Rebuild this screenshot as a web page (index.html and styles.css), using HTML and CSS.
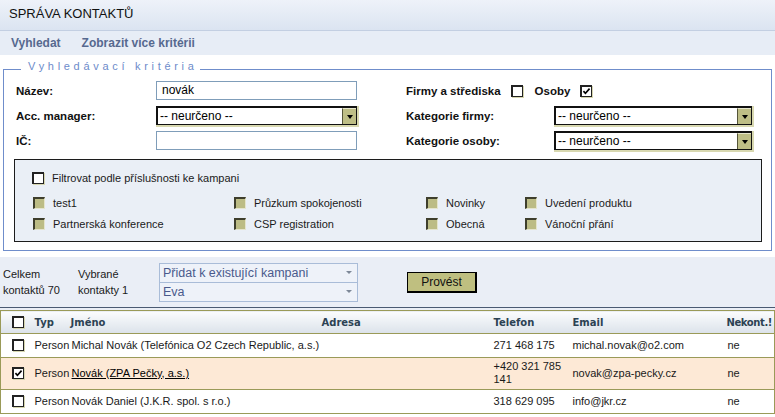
FILE: index.html
```html
<!DOCTYPE html>
<html lang="cs">
<head>
<meta charset="utf-8">
<title>Správa kontaktů</title>
<link rel="stylesheet" href="styles.css">
</head>
<body>
<header class="title">SPRÁVA KONTAKTŮ</header>
<nav class="tabs"><a>Vyhledat</a><a>Zobrazit více kritérii</a></nav>

<div class="search">
  <fieldset class="crit">
    <legend>Vyhledávací kritéria</legend>
    <div class="grid">
      <div class="lbl">Název:</div>
      <div class="input">novák</div>
      <div></div>
      <div class="lbl flags">Firmy a střediska <span class="cb"></span> Osoby <span class="cb checked"><svg viewBox="0 0 10 10"><path d="M1.6 4.6 L3.8 7 L8.4 1.8"/></svg></span></div>

      <div class="lbl">Acc. manager:</div>
      <div class="sel"><span class="sel-text">-- neurčeno --</span><span class="sel-btn"><i></i></span></div>
      <div></div>
      <div class="lbl rl">Kategorie firmy:</div>
      <div class="sel"><span class="sel-text">-- neurčeno --</span><span class="sel-btn"><i></i></span></div>

      <div class="lbl">IČ:</div>
      <div class="input"></div>
      <div></div>
      <div class="lbl rl">Kategorie osoby:</div>
      <div class="sel"><span class="sel-text">-- neurčeno --</span><span class="sel-btn"><i></i></span></div>
    </div>

    <div class="camp">
      <div class="item filter"><span class="cb"></span>Filtrovat podle příslušnosti ke kampani</div>
      <div class="camp-grid">
        <div class="item"><span class="ocb"></span>test1</div>
        <div class="item"><span class="ocb"></span>Průzkum spokojenosti</div>
        <div class="item"><span class="ocb"></span>Novinky</div>
        <div class="item"><span class="ocb"></span>Uvedení produktu</div>
        <div class="item"><span class="ocb"></span>Partnerská konference</div>
        <div class="item"><span class="ocb"></span>CSP registration</div>
        <div class="item"><span class="ocb"></span>Obecná</div>
        <div class="item"><span class="ocb"></span>Vánoční přání</div>
      </div>
    </div>
  </fieldset>
</div>

<div class="actions">
  <div class="count">Celkem<br>kontaktů 70</div>
  <div class="picked">Vybrané<br>kontakty 1</div>
  <div class="pickers">
    <div class="pick"><span>Přidat k existující kampani</span><i></i></div>
    <div class="pick"><span>Eva</span><i></i></div>
  </div>
  <div class="btn">Provést</div>
</div>

<div class="results">
  <table>
    <colgroup>
      <col class="c-cb"><col class="c-typ"><col class="c-name"><col class="c-addr"><col class="c-tel"><col class="c-mail"><col class="c-nk">
    </colgroup>
    <thead>
      <tr>
        <th class="t-cb"><span class="cb"></span></th>
        <th class="t-typ">Typ</th>
        <th class="t-name">Jméno</th>
        <th>Adresa</th>
        <th>Telefon</th>
        <th>Email</th>
        <th class="t-nk">Nekont.!</th>
      </tr>
    </thead>
    <tbody>
      <tr>
        <td class="t-cb"><span class="cb"></span></td>
        <td class="t-typ">Person</td>
        <td class="t-name">Michal Novák (Telefónica O2 Czech Republic, a.s.)</td>
        <td></td>
        <td>271 468 175</td>
        <td>michal.novak@o2.com</td>
        <td>ne</td>
      </tr>
      <tr class="picked-row">
        <td class="t-cb"><span class="cb checked"><svg viewBox="0 0 10 10"><path d="M1.6 4.6 L3.8 7 L8.4 1.8"/></svg></span></td>
        <td class="t-typ">Person</td>
        <td class="t-name"><u>Novák (ZPA Pečky, a.s.)</u></td>
        <td></td>
        <td>+420 321 785 141</td>
        <td>novak@zpa-pecky.cz</td>
        <td>ne</td>
      </tr>
      <tr>
        <td class="t-cb"><span class="cb"></span></td>
        <td class="t-typ">Person</td>
        <td class="t-name">Novák Daniel (J.K.R. spol. s r.o.)</td>
        <td></td>
        <td>318 629 095</td>
        <td>info@jkr.cz</td>
        <td>ne</td>
      </tr>
    </tbody>
  </table>
</div>
</body>
</html>
```

FILE: styles.css
```css
* { box-sizing: border-box; }

body {
  margin: 0;
  font-family: "Liberation Sans", Arial, sans-serif;
  font-size: 11px;
  color: #1a1a1a;
  background: #fff;
}

.title {
  height: 31px;
  padding: 6px 9px 0;
  line-height: 15px;
  font-size: 13px;
  color: #111;
  background: linear-gradient(#eef2f9, #dbe4f1);
  border-bottom: 1px solid #c3cfe2;
}

.tabs {
  display: flex;
  gap: 21px;
  height: 24px;
  padding: 5px 11px;
  line-height: 14px;
  font-size: 12px;
  font-weight: bold;
  color: #56698f;
  background: #e7edf6;
}

.search {
  padding: 5px 3px 6px;
  background: #fff;
}

.crit {
  margin: 0;
  min-width: 0;
  padding: 3px 9px 8px 10px;
  border: 1px solid #6f8dcb;
}

.crit legend {
  margin-left: 7px;
  padding: 0 2px 6px 7px;
  font-size: 11px;
  line-height: 12px;
  letter-spacing: 3.7px;
  color: #6d8bca;
}

.grid {
  display: grid;
  grid-template-columns: 142px 201px 49px 148px 198px;
  grid-auto-rows: 19px;
  row-gap: 6px;
  align-items: center;
}

.lbl {
  padding-left: 2px;
  font-size: 11.5px;
  font-weight: bold;
  color: #111;
}
.lbl.rl { padding-left: 0; }

.flags {
  grid-column: span 2;
  padding-left: 0;
  display: flex;
  align-items: center;
}
.flags .cb { margin: 0 12px 0 10px; }

.input {
  height: 19px;
  border: 1px solid #7f9db9;
  background: #fff;
  font-size: 12px;
  line-height: 17px;
  padding-left: 5px;
  color: #000;
}

.sel {
  display: flex;
  height: 19px;
  background: #fff;
  border-style: solid;
  border-color: #111;
  border-width: 2px 1px 1px 2px;
  box-shadow: 1px 1px 0 1px #d8d8b0;
}
.sel-text {
  flex: 1;
  font-size: 12px;
  line-height: 16px;
  padding-left: 2px;
  color: #000;
}
.sel-btn {
  width: 14px;
  display: flex;
  align-items: center;
  justify-content: center;
  background: #bebe86;
  border-left: 1px solid #55553a;
  border-top: 1px solid #e6e6cc;
}
.sel-btn i {
  width: 0;
  height: 0;
  border-left: 3px solid transparent;
  border-right: 3px solid transparent;
  border-top: 4px solid #000;
}

.cb {
  display: inline-block;
  flex: none;
  width: 12px;
  height: 12px;
  background: #fff;
  border-style: solid;
  border-color: #222;
  border-width: 2px 1px 1px 2px;
  box-shadow: 1px 1px 0 #d6d6b0;
  vertical-align: middle;
}
.cb svg {
  display: block;
  width: 9px;
  height: 9px;
}
.cb svg path {
  fill: none;
  stroke: #000;
  stroke-width: 1.8;
}

.ocb {
  display: inline-block;
  flex: none;
  width: 12px;
  height: 12px;
  background: #bcbc85;
  border-style: solid;
  border-width: 2px 1px 1px 2px;
  border-color: #3e3e2c #e4e4cc #e4e4cc #3e3e2c;
}

.camp {
  margin-top: 9px;
  padding: 12px 0 9px 17px;
  border: 1px solid #1c1c1c;
  background: #eaeff6;
}

.item {
  display: flex;
  align-items: center;
  gap: 8px;
  font-size: 11px;
  color: #1a1a1a;
}
.filter { height: 12px; }

.camp-grid {
  display: grid;
  grid-template-columns: 201px 192px 99px auto;
  grid-auto-rows: 16px;
  row-gap: 5px;
  margin-top: 11px;
  padding-left: 1px;
}

.actions {
  display: flex;
  align-items: center;
  height: 50px;
  padding-left: 3px;
  background: #eaeef6;
  line-height: 16px;
}
.count { width: 75px; }
.picked { width: 81px; }
.pickers {
  width: 199px;
  display: flex;
  flex-direction: column;
}
.pick {
  height: 20px;
  display: flex;
  align-items: center;
  justify-content: space-between;
  padding: 0 5px 0 3px;
  border: 1px solid #a9bcd8;
  background: #eef2f9;
  font-size: 12.5px;
  color: #4a5a8c;
}
.pick + .pick { margin-top: -1px; }
.pick i {
  width: 0;
  height: 0;
  border-left: 3px solid transparent;
  border-right: 3px solid transparent;
  border-top: 3px solid #7d8898;
}

.btn {
  margin-left: 49px;
  width: 70px;
  height: 21px;
  border-style: solid;
  border-color: #000;
  border-width: 1px 2px 2px 1px;
  background: #bfbf80;
  font-size: 12px;
  line-height: 18px;
  text-align: center;
  color: #111;
}

.results {
  border-top: 1px solid #4a5a72;
  padding-top: 2px;
  background: #eaeef6;
}

table {
  width: 774px;
  table-layout: fixed;
  border-collapse: collapse;
  border: 1px solid #9a9a58;
  background: #fff;
}
.c-cb { width: 30px; }
.c-typ { width: 39px; }
.c-name { width: 248px; }
.c-addr { width: 172px; }
.c-tel { width: 79px; }
.c-mail { width: 155px; }
.c-nk { width: 51px; }

th {
  height: 23px;
  padding: 0 4px;
  text-align: left;
  font-family: "DejaVu Sans", Verdana, sans-serif;
  font-size: 10px;
  font-weight: bold;
  color: #2c4253;
  background: linear-gradient(#fbfcfd, #dbe2ea);
  border-bottom: 1px solid #9a9a58;
  white-space: nowrap;
}
th.t-nk {
  padding-left: 3px;
  padding-right: 0;
  letter-spacing: -0.4px;
}

td {
  height: 24px;
  padding: 2px 4px 3px;
  line-height: 13px;
  vertical-align: middle;
  border-top: 1px solid #9a9a58;
  color: #1a1a1a;
}

.t-cb { padding-left: 11px; padding-right: 0; }
th.t-cb .cb, td.t-cb .cb { display: block; }
.t-typ { padding-right: 0; }
.t-name { padding-left: 1px; white-space: nowrap; }
td.t-name { padding-left: 2px; }

.picked-row td { background: #fde9d6; }
u { text-decoration: underline; color: #000; }
```
